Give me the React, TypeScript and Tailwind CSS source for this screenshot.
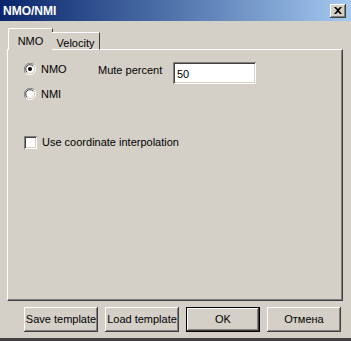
import React from 'react';

const raised =
  'shadow-[inset_-1px_-1px_#404040,inset_1px_1px_#ffffff,inset_-2px_-2px_#808080,inset_2px_2px_#d4d0c8]';
const sunken =
  'shadow-[inset_1px_1px_#808080,inset_-1px_-1px_#ffffff,inset_2px_2px_#404040,inset_-2px_-2px_#d4d0c8]';

function Radio({ checked }: { checked?: boolean }) {
  return (
    <svg width="12" height="12" viewBox="0 0 12 12" className="shrink-0">
      <path d="M10.5 2 A5.5 5.5 0 0 0 2 10.5" fill="none" stroke="#808080" strokeWidth="1" />
      <path d="M1.5 10 A5.5 5.5 0 0 0 10 1.5" fill="none" stroke="#ffffff" strokeWidth="1" />
      <circle cx="6" cy="6" r="4.5" fill="#ffffff" />
      <path d="M9 3 A4.2 4.2 0 0 0 3 9" fill="none" stroke="#404040" strokeWidth="1" />
      <path d="M3 9.2 A4.2 4.2 0 0 0 9.2 3" fill="none" stroke="#d4d0c8" strokeWidth="1" />
      {checked && <circle cx="6" cy="6" r="2" fill="#000000" />}
    </svg>
  );
}

function Button({ label, isDefault }: { label: string; isDefault?: boolean }) {
  return (
    <div
      className={`h-[25px] w-[74px] flex items-center justify-center bg-[#d4d0c8] ${
        isDefault ? 'border border-black' : ''
      }`}
    >
      <div className={`w-full h-full flex items-center justify-center whitespace-nowrap ${raised}`}>
        <span>{label}</span>
      </div>
    </div>
  );
}

export default function App() {
  return (
    <div
      className="w-[351px] h-[341px] bg-[#d4d0c8] flex flex-col text-[11px] text-black border-b-[3px] border-[#404040] select-none"
      style={{ fontFamily: '"Liberation Sans", Arial, sans-serif' }}
    >
      {/* title bar */}
      <div className="h-[21px] shrink-0 flex items-center justify-between pl-[3px] pr-[5px] bg-gradient-to-r from-[#0a246a] to-[#a6caf0]">
        <span className="text-white font-bold text-[12px]">NMO/NMI</span>
        <div className={`w-[16px] h-[14px] bg-[#d4d0c8] flex items-center justify-center ${raised}`}>
          <svg width="8" height="7" viewBox="0 0 8 7">
            <path d="M0 0h2l2 2 2-2h2L5 3.5 8 7H6L4 5 2 7H0l3-3.5z" fill="#000" />
          </svg>
        </div>
      </div>

      {/* tabs */}
      <div className="flex items-end h-[22px] mt-[7px] ml-[8px] relative z-10">
        <div className="h-[22px] w-[45px] -mr-[1px] bg-[#d4d0c8] border-l border-t border-white rounded-tl-[2px] border-r border-r-[#404040] flex justify-center pt-[4px]">
          NMO
        </div>
        <div className="h-[18px] w-[48px] bg-[#d4d0c8] border-t border-white border-r border-r-[#404040] border-b border-b-white flex justify-center pt-[2px]">
          Velocity
        </div>
      </div>

      {/* panel */}
      <div className="ml-[7px] w-[336px] h-[252px] -mt-[1px] border-t border-l border-white border-r border-b border-r-[#404040] border-b-[#404040] shrink-0">
        <div className="w-full h-full border-r border-b border-r-[#808080] border-b-[#808080] pl-[16px] pt-[13px]">
          <div className="flex">
            <div className="flex flex-col gap-[13px] w-[74px]">
              <label className="flex items-center gap-[5px] h-[12px]">
                <Radio checked />
                <span>NMO</span>
              </label>
              <label className="flex items-center gap-[5px] h-[12px]">
                <Radio />
                <span>NMI</span>
              </label>
            </div>
            <span className="-mt-[1px] w-[75px] whitespace-nowrap">Mute percent</span>
            <div className={`w-[83px] h-[22px] -mt-[1px] bg-white ${sunken} pl-[4px] pt-[4px]`}>
              50
            </div>
          </div>

          <label className="flex items-center gap-[5px] mt-[34px]">
            <div className={`w-[13px] h-[13px] bg-white shrink-0 ${sunken}`} />
            <span>Use coordinate interpolation</span>
          </label>
        </div>
      </div>

      {/* buttons */}
      <div className="flex gap-[7px] pl-[24px] mt-[6px]">
        <Button label="Save template" />
        <Button label="Load template" />
        <Button label="OK" isDefault />
        <Button label="Отмена" />
      </div>
    </div>
  );
}
